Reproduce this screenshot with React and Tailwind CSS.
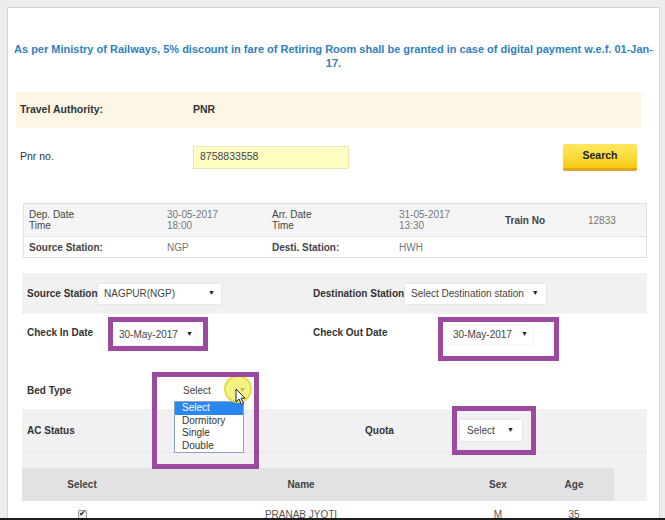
import React from "react";

function Sel({ text, className = "", arrowGap = "ml-auto" }) {
  return (
    <div className={"flex items-center bg-white text-[10px] text-[#444] px-[6px] whitespace-nowrap shadow-[0_0_2px_rgba(0,0,0,0.12)] " + className}>
      <span>{text}</span>
      <span className={"text-[7px] text-[#222] " + arrowGap}>▼</span>
    </div>
  );
}

function PurpleBox({ className }) {
  return <div className={"absolute border-[5px] border-[#9b4aa0] pointer-events-none " + className} />;
}

export default function App() {
  return (
    <div className="relative w-[665px] h-[520px] overflow-hidden bg-[#ececec] [font-family:'Liberation_Sans',Arial,sans-serif] text-[#333]">
      <div className="ml-[7px] mt-[7px] w-[653px] h-[540px] bg-white border border-[#d4d4d4]">
        {/* Notice */}
        <div className="pt-[34px] h-[84px] text-center text-[11px] leading-[14px] font-bold text-[#2f7fc1] whitespace-nowrap">
          As per Ministry of Railways, 5% discount in fare of Retiring Room shall be granted in case of digital payment w.e.f. 01-Jan-
          <br />
          17.
        </div>

        {/* Travel Authority band */}
        <div className="ml-[8px] w-[625px] h-[36px] bg-[#fcf6e5] flex items-center text-[10.5px] font-bold text-[#333]">
          <div className="pl-[4px] w-[177px]">Travel Authority:</div>
          <div>PNR</div>
        </div>

        {/* Pnr row */}
        <div className="ml-[8px] w-[625px] h-[58px] flex items-center text-[10.5px]">
          <div className="pl-[4px] w-[177px] text-[#333]">Pnr no.</div>
          <div className="w-[156px] h-[23px] bg-[#ffffc4] border border-[#e6e6b8] flex items-center pl-[6px] text-[#444]">
            8758833558
          </div>
          <button className="ml-auto mr-[4px] w-[74px] h-[27px] rounded-[2px] bg-gradient-to-b from-[#ffe95c] to-[#f8cc00] border-b-[3px] border-[#e2a32a] text-[10.5px] font-bold text-[#222] flex items-center justify-center">
            Search
          </button>
        </div>

        {/* Info table */}
        <div className="mt-[17px] ml-[15px] w-[624px] border border-[#e0e0e0] text-[10px] leading-[11px]">
          <div className="h-[32px] bg-[#f5f5f5] flex items-center pl-[5px]">
            <div className="w-[138px] text-[#444]">Dep. Date<br />Time</div>
            <div className="w-[105px] text-[#777]">30-05-2017<br />18:00</div>
            <div className="w-[127px] text-[#444]">Arr. Date<br />Time</div>
            <div className="w-[106px] text-[#777]">31-05-2017<br />13:30</div>
            <div className="w-[83px] font-bold text-[#444]">Train No</div>
            <div className="text-[#777]">12833</div>
          </div>
          <div className="h-[21px] border-t border-[#e4e4e4] flex items-center pl-[5px]">
            <div className="w-[138px] font-bold text-[#444]">Source Station:</div>
            <div className="w-[105px] text-[#777]">NGP</div>
            <div className="w-[127px] font-bold text-[#444]">Desti. Station:</div>
            <div className="text-[#777]">HWH</div>
          </div>
        </div>

        {/* Station row */}
        <div className="mt-[15px] ml-[14px] w-[625px] h-[41px] bg-[#f1f1f1] flex items-center text-[10px] whitespace-nowrap">
          <div className="pl-[5px] w-[76px] font-bold text-[#333]">Source Station</div>
          <Sel text="NAGPUR(NGP)" className="w-[123px] h-[20px]" />
          <div className="ml-[92px] w-[92px] font-bold text-[#333]">Destination Station</div>
          <Sel text="Select Destination station" className="w-[141px] h-[20px]" arrowGap="ml-[8px]" />
        </div>

        {/* Check in row */}
        <div className="ml-[14px] w-[625px] h-[57px] flex items-start text-[10px] whitespace-nowrap">
          <div className="pl-[5px] w-[91px] mt-[11px] text-[#333] font-bold">Check In Date</div>
          <Sel text="30-May-2017" className="mt-[9px] w-[84px] h-[22px]" arrowGap="ml-[8px]" />
          <div className="ml-[116px] w-[134px] mt-[11px] font-bold text-[#333]">Check Out Date</div>
          <Sel text="30-May-2017" className="mt-[11px] w-[86px] h-[19px]" arrowGap="ml-[9px]" />
        </div>

        {/* Bed type row */}
        <div className="ml-[14px] w-[625px] h-[38px] flex items-center text-[10px]">
          <div className="pl-[5px] w-[153px] font-bold text-[#333]">Bed Type</div>
          <Sel text="Select" className="w-[77px] h-[20px] shadow-none pl-[8px]" />
        </div>

        {/* AC status + table */}
        <div className="ml-[14px] w-[625px] bg-[#f1f1f3] text-[10px]">
          <div className="h-[44px] flex items-center border-b border-[#e6e6e6]">
            <div className="pl-[5px] w-[343px] font-bold text-[#333]">AC Status</div>
            <div className="w-[95px] font-bold text-[#333]">Quota</div>
            <Sel text="Select" className="w-[62px] h-[21px] pl-[7px] pr-[8px]" />
          </div>
          <div className="h-[15px]" />
          <div className="w-[592px] h-[33px] bg-[#e2e2e4] flex items-center font-bold text-[#444]">
            <div className="w-[120px] text-center">Select</div>
            <div className="w-[318px] text-center">Name</div>
            <div className="w-[76px] text-center">Sex</div>
            <div className="w-[76px] text-center">Age</div>
          </div>
        </div>
        <div className="ml-[14px] w-[592px] h-[26px] flex items-center text-[10px] text-[#555]">
          <div className="w-[120px] flex justify-center">
            <div className="w-[9px] h-[9px] border border-[#999] bg-[#eee] rounded-[1px] flex items-center justify-center text-[8px] leading-[8px] text-[#222]">
              ✔
            </div>
          </div>
          <div className="w-[318px] text-center">PRANAB JYOTI</div>
          <div className="w-[76px] text-center">M</div>
          <div className="w-[76px] text-center">35</div>
        </div>
      </div>

      {/* Open dropdown list */}
      <div className="absolute left-[174px] top-[401px] w-[70px] bg-white border border-[#8fa3bf] text-[10px] leading-[12.5px] text-[#333]">
        <div className="bg-[#2a86f0] text-white pl-[7px]">Select</div>
        <div className="pl-[7px]">Dormitory</div>
        <div className="pl-[7px]">Single</div>
        <div className="pl-[7px]">Double</div>
      </div>

      {/* Cursor highlight */}
      <div className="absolute left-[224px] top-[375px] w-[28px] h-[28px] rounded-full bg-[rgba(240,238,90,0.75)] border-2 border-[rgba(225,220,60,0.9)]" />
      <svg className="absolute left-[235px] top-[388px]" width="12" height="18" viewBox="0 0 12 18">
        <path d="M1 1 L1 14 L4 11 L6.5 16.5 L8.5 15.5 L6 10.2 L10 10.2 Z" fill="#fff" stroke="#222" strokeWidth="1" strokeLinejoin="round" />
      </svg>

      {/* Purple annotation boxes */}
      <PurpleBox className="left-[108px] top-[317px] w-[100px] h-[34px]" />
      <PurpleBox className="left-[438px] top-[317px] w-[121px] h-[44px]" />
      <PurpleBox className="left-[152px] top-[372px] w-[107px] h-[97px]" />
      <PurpleBox className="left-[452px] top-[406px] w-[84px] h-[49px]" />

      {/* bottom dark edge */}
      <div className="absolute left-0 bottom-0 w-full h-[2px] bg-[#1c1c1c]" />
    </div>
  );
}
